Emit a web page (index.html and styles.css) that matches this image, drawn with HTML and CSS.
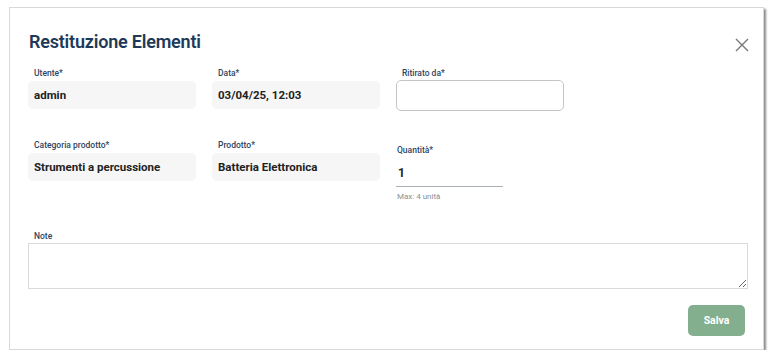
FILE: index.html
```html
<!DOCTYPE HTML>
<html>
<head>
<meta charset="utf-8">
<title>Restituzione Elementi</title>
<link rel="stylesheet" href="styles.css">
</head>
<body>
<div class="modal">
  <div class="modal-head">
    <h2>Restituzione Elementi</h2>
    <a class="close" href="javascript:;" title="Chiudi">
      <svg width="14" height="14" viewBox="0 0 14 14"><path d="M1 1L13 13M13 1L1 13" stroke="#777" stroke-width="1.4" fill="none"/></svg>
    </a>
  </div>
  <form class="grid">
    <div class="field">
      <label>Utente*</label>
      <div class="value">admin</div>
    </div>
    <div class="field">
      <label>Data*</label>
      <div class="value">03/04/25, 12:03</div>
    </div>
    <div class="field">
      <label>Ritirato da*</label>
      <input class="input" type="text">
    </div>
    <div></div>

    <div class="field row2">
      <label>Categoria prodotto*</label>
      <div class="value">Strumenti a percussione</div>
    </div>
    <div class="field row2">
      <label>Prodotto*</label>
      <div class="value">Batteria Elettronica</div>
    </div>
    <div class="field row2 qty">
      <label>Quantità*</label>
      <div class="qty-input">1</div>
      <p class="hint">Max: 4 unità</p>
    </div>
    <div></div>

    <div class="field note">
      <label>Note</label>
      <textarea></textarea>
    </div>
  </form>
  <div class="modal-foot">
    <button class="btn" type="button">Salva</button>
  </div>
</div>
</body>
</html>
```

FILE: styles.css
```css
body{margin:0;background:#fff;font-family:Roboto,"Noto Sans",sans-serif;color:#222;}
.modal{box-sizing:border-box;width:755px;height:343px;margin:7px 0 0 9px;background:#fff;border:1px solid #d8d8d8;box-shadow:2px 2px 2px rgba(0,0,0,.45);padding:0 15px 0 18px;}
.modal-head{display:flex;justify-content:space-between;align-items:center;height:59px;padding-top:4px;box-sizing:border-box;}
.modal-head h2{margin:4px 0 0;font-size:18px;font-weight:600;color:#1e3a58;letter-spacing:-.2px;padding-left:1px;}
.close{display:block;width:14px;height:14px;margin-right:-1px;margin-top:11px;}
.close svg{display:block;}
.grid{display:grid;grid-template-columns:repeat(4,168px);column-gap:16px;}
.field label{display:block;font-size:8.5px;font-weight:500;color:#2d4563;padding-left:6px;height:12px;line-height:12px;margin-bottom:2px;}
.value{background:#f6f6f6;border-radius:5px;height:28px;line-height:28px;padding-left:6px;font-size:11.5px;font-weight:700;color:#222;}
.input{box-sizing:border-box;display:block;width:100%;height:31px;margin:-1px 0 0;border:1px solid #c4c4c4;border-radius:5px;background:#fff;}
.row2{margin-top:28px;}
.qty label{margin-top:5px;margin-bottom:8px;padding-left:1px;}
.qty-input{width:107px;box-sizing:border-box;padding:0 0 0 2px;height:23px;line-height:19px;font-size:12px;font-weight:700;border-bottom:1px solid #a9b0b8;}
.hint{margin:5px 0 0 1px;font-size:8px;color:#8a8f96;}
.note{grid-column:1 / span 4;margin-top:29px;}
.note label{margin-bottom:1px;}
.note textarea{box-sizing:border-box;display:block;width:720px;height:46px;border:1px solid #dadada;margin:0;}
.modal-foot{display:flex;justify-content:flex-end;padding:16px 3px 0 0;}
.btn{width:57px;height:31px;border:0;border-radius:5px;background:#84af8e;color:#fff;font-family:inherit;font-size:10.5px;font-weight:700;}
```
